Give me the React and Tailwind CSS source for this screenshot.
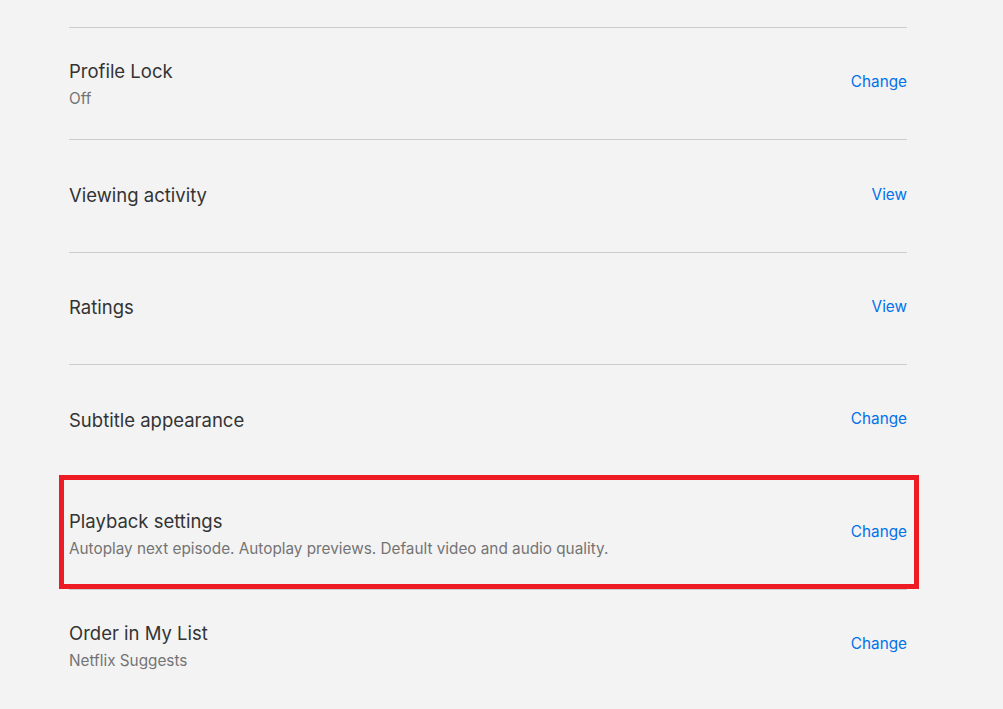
import React from 'react';

const rows = [
  { title: 'Profile Lock', sub: 'Off', action: 'Change' },
  { title: 'Viewing activity', action: 'View' },
  { title: 'Ratings', action: 'View' },
  { title: 'Subtitle appearance', action: 'Change' },
  {
    title: 'Playback settings',
    sub: 'Autoplay next episode. Autoplay previews. Default video and audio quality.',
    action: 'Change',
    marked: true,
  },
  { title: 'Order in My List', sub: 'Netflix Suggests', action: 'Change' },
];

const SettingRow = ({ title, sub, action, marked }) => (
  <li className="relative h-[112.4px] border-t border-[#cccccc] flex items-center justify-between">
    <div className={sub ? 'flex flex-col mt-[1px]' : 'flex flex-col -mt-[2px]'}>
      <h3 className="text-[18.5px] leading-6 text-[#333333] font-normal">{title}</h3>
      {sub && <p className="mt-[6px] text-[15.3px] leading-5 text-[#737373]">{sub}</p>}
    </div>
    <a href="#" className="-mt-[3px] text-[15.3px] leading-5 text-[#0071eb]">{action}</a>
    {/* rood kader rond de markering */}
    {marked && (
      <div className="absolute -top-[3px] bottom-0 -left-[10px] -right-[12px] border-[5px] border-[#ed1c24] pointer-events-none" />
    )}
  </li>
);

export default function App() {
  return (
    <div className="min-h-[709px] bg-[#f3f3f3] font-['Inter','Liberation_Sans',sans-serif] overflow-hidden">
      <ul className="ml-[69px] w-[838px] pt-[27px]">
        {rows.map((r) => (
          <SettingRow key={r.title} {...r} />
        ))}
      </ul>
    </div>
  );
}
